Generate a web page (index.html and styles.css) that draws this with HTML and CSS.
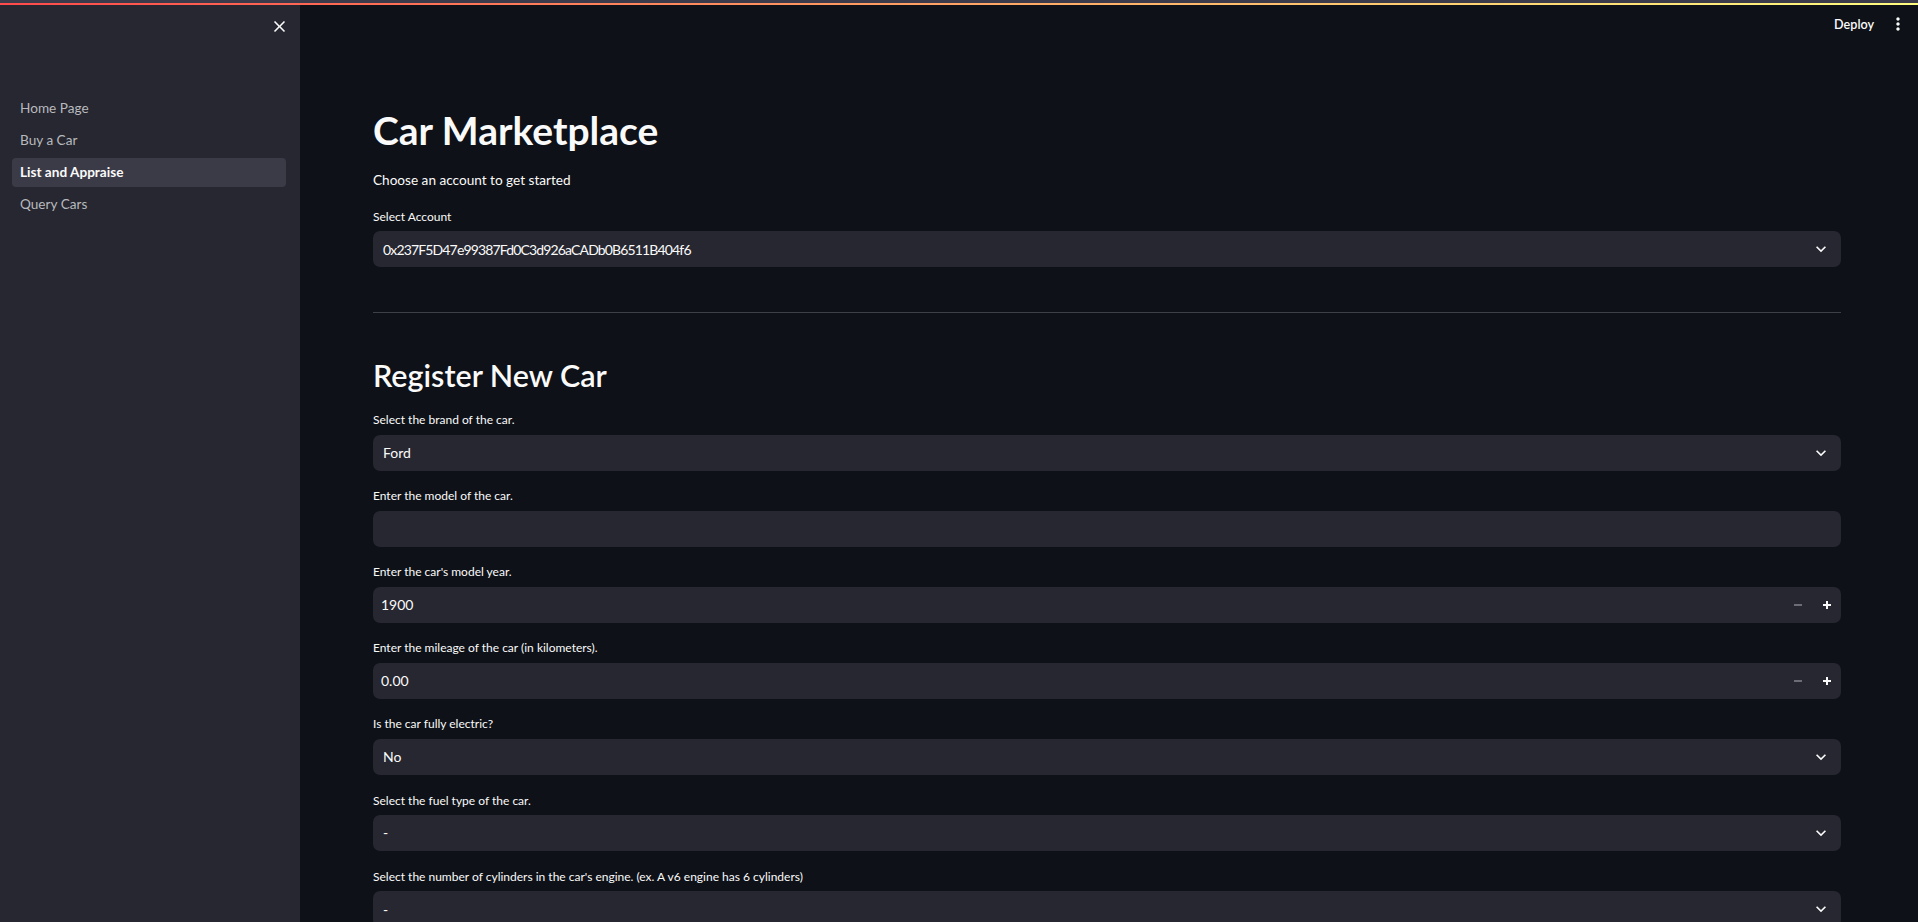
FILE: index.html
```html
<!DOCTYPE html>
<html lang="en">
<head>
<meta charset="utf-8">
<title>Car Marketplace</title>
<link rel="stylesheet" href="styles.css">
</head>
<body>
<div class="app">
  <div class="topbar"><div class="decoration"></div></div>
  <aside class="sidebar">
    <div class="sb-head">
      <button class="close-btn" aria-label="Close sidebar">
        <svg viewBox="0 0 24 24" width="19" height="19"><path fill="currentColor" d="M19 6.41L17.59 5 12 10.59 6.41 5 5 6.41 10.59 12 5 17.59 6.41 19 12 13.41 17.59 19 19 17.59 13.41 12z"/></svg>
      </button>
    </div>
    <nav class="nav">
      <a class="nav-link">Home Page</a>
      <a class="nav-link">Buy a Car</a>
      <a class="nav-link active">List and Appraise</a>
      <a class="nav-link">Query Cars</a>
    </nav>
  </aside>
  <main class="main">
    <header class="header">
      <span class="deploy">Deploy</span>
      <span class="menu">
        <svg viewBox="0 0 24 24" width="20" height="20"><path fill="currentColor" d="M12 8c1.1 0 2-.9 2-2s-.9-2-2-2-2 .9-2 2 .9 2 2 2zm0 2c-1.1 0-2 .9-2 2s.9 2 2 2 2-.9 2-2-.9-2-2-2zm0 6c-1.1 0-2 .9-2 2s.9 2 2 2 2-.9 2-2-.9-2-2-2z"/></svg>
      </span>
    </header>
    <div class="block">
      <h1 class="title">Car Marketplace</h1>
      <p class="text">Choose an account to get started</p>
      <div class="field">
        <label class="label">Select Account</label>
        <div class="select"><span class="value address">0x237F5D47e99387Fd0C3d926aCADb0B6511B404f6</span><svg class="chev" viewBox="0 0 24 24" width="20" height="20"><path fill="currentColor" d="M16.59 8.59L12 13.17 7.41 8.59 6 10l6 6 6-6z"/></svg></div>
      </div>
      <hr class="divider">
      <h2 class="subtitle">Register New Car</h2>
      <div class="field">
        <label class="label">Select the brand of the car.</label>
        <div class="select"><span class="value">Ford</span><svg class="chev" viewBox="0 0 24 24" width="20" height="20"><path fill="currentColor" d="M16.59 8.59L12 13.17 7.41 8.59 6 10l6 6 6-6z"/></svg></div>
      </div>
      <div class="field">
        <label class="label">Enter the model of the car.</label>
        <div class="input"></div>
      </div>
      <div class="field">
        <label class="label">Enter the car's model year.</label>
        <div class="number"><span class="num-value">1900</span><span class="step minus"><svg viewBox="0 0 10 10" width="10" height="10"><rect x="1" y="4" width="8" height="2" fill="currentColor"/></svg></span><span class="step plus"><svg viewBox="0 0 10 10" width="10" height="10"><rect x="1" y="4" width="8" height="2" fill="currentColor"/><rect x="4" y="1" width="2" height="8" fill="currentColor"/></svg></span></div>
      </div>
      <div class="field">
        <label class="label">Enter the mileage of the car (in kilometers).</label>
        <div class="number"><span class="num-value">0.00</span><span class="step minus"><svg viewBox="0 0 10 10" width="10" height="10"><rect x="1" y="4" width="8" height="2" fill="currentColor"/></svg></span><span class="step plus"><svg viewBox="0 0 10 10" width="10" height="10"><rect x="1" y="4" width="8" height="2" fill="currentColor"/><rect x="4" y="1" width="2" height="8" fill="currentColor"/></svg></span></div>
      </div>
      <div class="field">
        <label class="label">Is the car fully electric?</label>
        <div class="select"><span class="value">No</span><svg class="chev" viewBox="0 0 24 24" width="20" height="20"><path fill="currentColor" d="M16.59 8.59L12 13.17 7.41 8.59 6 10l6 6 6-6z"/></svg></div>
      </div>
      <div class="field">
        <label class="label">Select the fuel type of the car.</label>
        <div class="select"><span class="value">-</span><svg class="chev" viewBox="0 0 24 24" width="20" height="20"><path fill="currentColor" d="M16.59 8.59L12 13.17 7.41 8.59 6 10l6 6 6-6z"/></svg></div>
      </div>
      <div class="field">
        <label class="label">Select the number of cylinders in the car's engine. (ex. A v6 engine has 6 cylinders)</label>
        <div class="select"><span class="value">-</span><svg class="chev" viewBox="0 0 24 24" width="20" height="20"><path fill="currentColor" d="M16.59 8.59L12 13.17 7.41 8.59 6 10l6 6 6-6z"/></svg></div>
      </div>
    </div>
  </main>
</div>
</body>
</html>
```

FILE: styles.css
```css
* { box-sizing: border-box; }

html, body {
  margin: 0;
  padding: 0;
  height: 100%;
  overflow: hidden;
  background: #0e1117;
  color: #fafafa;
  font-family: "Source Sans Pro", Lato, "Noto Sans", sans-serif;
  font-size: 14.4px;
}

.app {
  position: relative;
  display: flex;
  height: 100vh;
  overflow: hidden;
}

.topbar {
  position: absolute;
  top: 0;
  left: 0;
  right: 0;
  height: 3px;
  background: #3b3b4b;
  z-index: 10;
}

.decoration {
  position: absolute;
  top: 3px;
  left: 0;
  right: 0;
  height: 2px;
  background: linear-gradient(90deg, #ff4b4b, #fffd80);
}

.sidebar {
  width: 300px;
  flex: 0 0 300px;
  background: #262730;
  display: flex;
  flex-direction: column;
}

.sb-head {
  height: 93px;
  flex: 0 0 93px;
  display: flex;
  justify-content: flex-end;
  align-items: flex-start;
  padding: 17px 11px 0 0;
}

.close-btn {
  background: none;
  border: 0;
  padding: 0;
  color: #fafafa;
  width: 19px;
  height: 19px;
  display: flex;
}

.nav {
  display: flex;
  flex-direction: column;
  gap: 3.3px;
  padding: 0 14px 0 12px;
}

.nav-link {
  height: 29px;
  display: flex;
  align-items: center;
  padding-left: 8px;
  border-radius: 4px;
  color: #b8b9be;
  font-size: 13.6px;
}

.nav-link.active {
  background: #3a3b47;
  color: #fafafa;
  font-weight: 700;
}

.main {
  flex: 1;
  display: flex;
  flex-direction: column;
  min-width: 0;
  overflow: hidden;
}

.header {
  height: 48px;
  flex: 0 0 48px;
  display: flex;
  justify-content: flex-end;
  align-items: center;
  gap: 14px;
  padding: 0 10px 0 0;
}

.deploy {
  font-size: 12.6px;
  font-weight: 600;
  color: #fafafa;
}

.menu {
  display: flex;
  color: #fafafa;
}

.block {
  display: flex;
  flex-direction: column;
  flex: 0 0 auto;
  gap: 14.4px;
  padding: 58.8px 77px 0 73px;
}

.title {
  margin: -1.2px 0 1.2px;
  font-size: 39px;
  line-height: 48px;
  font-weight: 700;
}

.subtitle {
  margin: 0;
  font-size: 30.5px;
  line-height: 38.4px;
  font-weight: 600;
}

.text {
  margin: 0;
  line-height: 22px;
  font-size: 13.6px;
}

.field {
  display: flex;
  flex-direction: column;
  flex: 0 0 auto;
}

.label {
  height: 21.6px;
  margin-bottom: 4.1px;
  display: flex;
  align-items: center;
  font-size: 12px;
}

.select, .input, .number {
  height: 36px;
  flex: 0 0 36px;
  background: #262730;
  border-radius: 7px;
  display: flex;
  align-items: center;
}

.select {
  padding: 0 10px 0 10px;
  justify-content: space-between;
}

.value {
  font-size: 14px;
}

.value.address {
  letter-spacing: -0.85px;
}

.chev {
  color: #fafafa;
}

.number {
  padding-left: 8px;
  font-size: 14px;
}

.num-value {
  flex: 1;
}

.step {
  width: 28.8px;
  height: 36px;
  display: flex;
  align-items: center;
  justify-content: center;
}

.step.minus { color: #6b6d75; }
.step.plus { color: #fafafa; }

.divider {
  border: 0;
  height: 1px;
  flex: 0 0 1px;
  background: #3d4047;
  margin: 30px 0 29px;
}
```
